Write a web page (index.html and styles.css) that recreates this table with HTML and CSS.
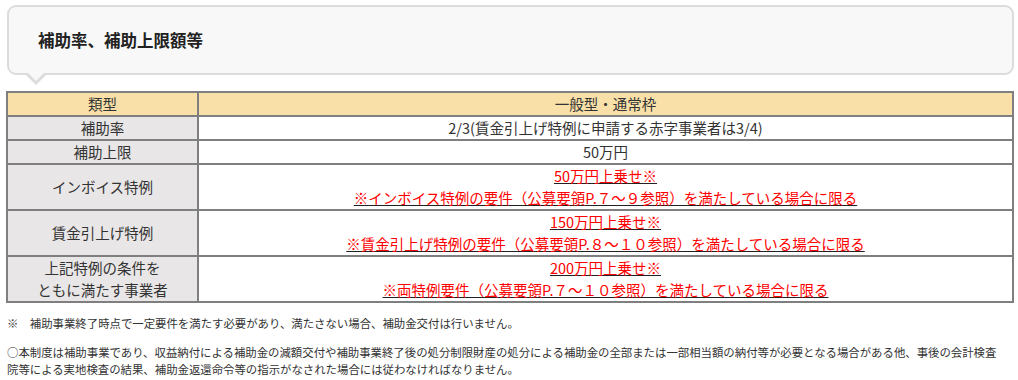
FILE: index.html
```html
<!DOCTYPE html>
<html lang="ja">
<head>
<meta charset="utf-8">
<link rel="stylesheet" href="styles.css">
</head>
<body>
<div class="page">
  <div class="bubble">
    <h2 class="bubble-title">補助率、補助上限額等</h2>
  </div>
  <table class="rates">
    <tr class="head">
      <th class="label">類型</th>
      <th>一般型・通常枠</th>
    </tr>
    <tr>
      <th class="label">補助率</th>
      <td>2/3(賃金引上げ特例に申請する赤字事業者は3/4)</td>
    </tr>
    <tr>
      <th class="label">補助上限</th>
      <td>50万円</td>
    </tr>
    <tr>
      <th class="label">インボイス特例</th>
      <td><u><span class="red">50万円上乗せ※</span></u><br><u><span class="red">※インボイス特例の要件（公募要領P.７～９参照）を満たしている場合に限る</span></u></td>
    </tr>
    <tr>
      <th class="label">賃金引上げ特例</th>
      <td><u><span class="red">150万円上乗せ※</span></u><br><u><span class="red">※賃金引上げ特例の要件（公募要領P.８～１０参照）を満たしている場合に限る</span></u></td>
    </tr>
    <tr>
      <th class="label">上記特例の条件を<br>ともに満たす事業者</th>
      <td><u><span class="red">200万円上乗せ※</span></u><br><u><span class="red">※両特例要件（公募要領P.７～１０参照）を満たしている場合に限る</span></u></td>
    </tr>
  </table>
  <p class="note">※　補助事業終了時点で一定要件を満たす必要があり、満たさない場合、補助金交付は行いません。</p>
  <p class="note">○本制度は補助事業であり、収益納付による補助金の減額交付や補助事業終了後の処分制限財産の処分による補助金の全部または一部相当額の納付等が必要となる場合がある他、事後の会計検査院等による実地検査の結果、補助金返還命令等の指示がなされた場合には従わなければなりません。</p>
</div>
</body>
</html>
```

FILE: styles.css
```css
html, body {
  margin: 0;
  padding: 0;
  background: #fff;
}
body {
  font-family: "Noto Sans CJK JP", "Noto Sans", sans-serif;
  color: #333;
}
.page {
  padding: 5px 4px 0 6px;
}
.bubble {
  position: relative;
  height: 66px;
  margin: 0 0 0 1px;
  border: 2px solid #dcdcdc;
  border-radius: 9px;
  background: #f8f8f8;
  display: flex;
  align-items: center;
  padding-left: 29px;
}
.bubble::before {
  content: "";
  position: absolute;
  left: 15px;
  bottom: -12px;
  border-left: 12px solid transparent;
  border-right: 12px solid transparent;
  border-top: 12px solid #dcdcdc;
}
.bubble::after {
  content: "";
  position: absolute;
  left: 18px;
  bottom: -8px;
  border-left: 9px solid transparent;
  border-right: 9px solid transparent;
  border-top: 9px solid #f8f8f8;
}
.bubble-title {
  margin: 0;
  font-size: 16.5px;
  font-weight: bold;
  color: #222;
  letter-spacing: 0;
}
.rates {
  width: 100%;
  margin-top: 16px;
  border-collapse: collapse;
  font-size: 14.5px;
  line-height: 22px;
  color: #333;
}
.rates th, .rates td {
  border: 2px solid #7f7f7f;
  padding: 0;
  text-align: center;
  font-weight: normal;
}
.rates .label {
  width: 189px;
  background: #e8e6e6;
}
.rates .head th {
  background: #f8e0a8;
}
.rates td {
  background: #fff;
}
.rates u {
  text-decoration-color: #222;
}
.red {
  color: #ff0000;
}
.note {
  margin: 12px 0 0 1px;
  padding-right: 8px;
  font-size: 11.4px;
  line-height: 17px;
  color: #333;
}
.note + .note {
  margin-top: 12px;
}
```
